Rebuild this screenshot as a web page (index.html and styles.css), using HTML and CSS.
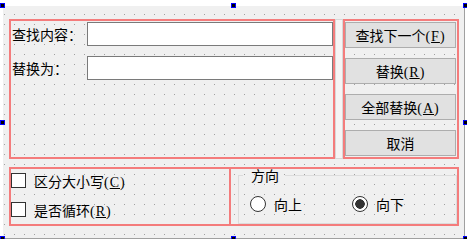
FILE: index.html
```html
<!DOCTYPE html>
<html lang="zh-CN">

<head>
    <meta charset="UTF-8">
    <link rel="stylesheet" href="styles.css">
    <title>查找和替换</title>
</head>

<body>
    <div class="form">
        <div class="top-row">
            <div class="layout fields">
                <label class="lbl">查找内容：</label>
                <div class="edit"></div>
                <label class="lbl">替换为：</label>
                <div class="edit"></div>
            </div>
            <div class="splitter"></div>
            <div class="layout buttons">
                <button class="btn">查找下一个<span class="acc">(<u>F</u>)</span></button>
                <button class="btn">替换<span class="acc">(<u>R</u>)</span></button>
                <button class="btn">全部替换<span class="acc">(<u>A</u>)</span></button>
                <button class="btn">取消</button>
            </div>
        </div>
        <div class="bottom-row">
            <div class="layout options">
                <div class="check"><span class="box"></span><span>区分大小写<span class="acc">(<u>C</u>)</span></span></div>
                <div class="check"><span class="box"></span><span>是否循环<span class="acc">(<u>R</u>)</span></span></div>
            </div>
            <div class="layout direction">
                <fieldset class="group">
                    <legend>方向</legend>
                    <div class="radio up"><span class="circle"></span>向上</div>
                    <div class="radio"><span class="circle checked"></span>向下</div>
                </fieldset>
            </div>
        </div>
    </div>

    <!-- selection handles -->
    <span class="handle h-tl"></span>
    <span class="handle h-tm"></span>
    <span class="handle h-tr"></span>
    <span class="handle h-ml"></span>
    <span class="handle h-mr"></span>
    <span class="handle h-bl"></span>
    <span class="handle h-bm"></span>
    <span class="handle h-br"></span>
</body>

</html>
```

FILE: styles.css
```css
body {
    margin: 0;
    position: relative;
    background: #fff;
    font-family: "Noto Sans CJK SC", sans-serif;
    font-size: 14px;
    color: #000;
}

.form {
    margin: 6px 0 0 3px;
    width: 462px;
    height: 233px;
    box-sizing: border-box;
    padding: 13px 0 0 6px;
    border-right: 1px solid #a0a0a0;
    border-bottom: 1px solid #a0a0a0;
    background-color: #a0a0a0;
    background-image:
        linear-gradient(to right, transparent 1px, #f0f0f0 1px),
        linear-gradient(to bottom, transparent 1px, #f0f0f0 1px);
    background-size: 10px 10px;
    background-position: 1px 8px;
}

.layout {
    box-sizing: border-box;
    border: 2px solid #f47c7c;
}

.top-row {
    display: flex;
    height: 140px;
}

.fields {
    width: 326px;
    display: grid;
    grid-template-columns: 76px 246px;
    grid-auto-rows: 24px;
    row-gap: 10px;
    align-content: start;
    padding-top: 1px;
}

.lbl {
    align-self: center;
    padding-left: 1px;
    line-height: 16px;
    white-space: nowrap;
}

.edit {
    box-sizing: border-box;
    background: #fff;
    border: 1px solid #7a7a7a;
}

.splitter {
    width: 8px;
    box-sizing: border-box;
    border: 1px solid #d8d8d8;
    background: #f5f5f5;
}

.buttons {
    width: 116px;
    display: flex;
    flex-direction: column;
    gap: 10px;
    padding: 1px 1px 1px 0;
}

.btn {
    height: 26px;
    box-sizing: border-box;
    padding: 0;
    font: inherit;
    color: #000;
    background: #e1e1e1;
    border: 1px solid #adadad;
}

.acc {
    letter-spacing: 1px;
    font-family: "Liberation Serif", serif;
}

.bottom-row {
    display: flex;
    height: 59px;
    margin-top: 8px;
}

.options {
    width: 222px;
    display: flex;
    flex-direction: column;
    gap: 6px;
}

.check {
    display: flex;
    align-items: center;
    gap: 8px;
    height: 23px;
}

.box {
    width: 15px;
    height: 15px;
    box-sizing: border-box;
    background: #fff;
    border: 1px solid #333;
}

.direction {
    width: 230px;
    margin-left: -2px;
    padding-left: 7px;
}

.group {
    display: flex;
    height: 55px;
    box-sizing: border-box;
    margin: 0;
    padding: 15px 0 0 11px;
    border: 1px solid #dcdcdc;
}

.group legend {
    margin-left: -7px;
    padding: 0 6px 0 8px;
    line-height: 12px;
}

.radio {
    display: flex;
    align-items: center;
    gap: 8px;
    height: 16px;
}

.radio.up {
    width: 102px;
}

.circle {
    width: 16px;
    height: 16px;
    box-sizing: border-box;
    border-radius: 50%;
    border: 1px solid #333;
    background: #fff;
}

.circle.checked {
    background: radial-gradient(circle, #333 0 4.5px, #fff 5px);
}

.handle {
    position: absolute;
    width: 5px;
    height: 5px;
    box-sizing: border-box;
    background: #000;
    border: 1px solid #00f;
}

.h-tl { left: 0; top: 3px; }
.h-tm { left: 231px; top: 3px; }
.h-tr { left: 463px; top: 3px; }
.h-ml { left: 0; top: 120px; }
.h-mr { left: 463px; top: 120px; }
.h-bl { left: 0; top: 236px; }
.h-bm { left: 231px; top: 236px; }
.h-br { left: 463px; top: 236px; }
```
